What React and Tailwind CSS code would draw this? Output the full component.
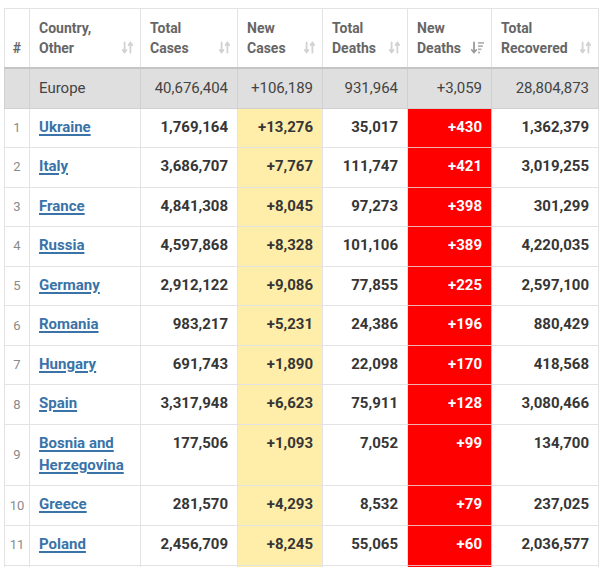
const rows = [
  ["1", "Ukraine", "1,769,164", "+13,276", "35,017", "+430", "1,362,379"],
  ["2", "Italy", "3,686,707", "+7,767", "111,747", "+421", "3,019,255"],
  ["3", "France", "4,841,308", "+8,045", "97,273", "+398", "301,299"],
  ["4", "Russia", "4,597,868", "+8,328", "101,106", "+389", "4,220,035"],
  ["5", "Germany", "2,912,122", "+9,086", "77,855", "+225", "2,597,100"],
  ["6", "Romania", "983,217", "+5,231", "24,386", "+196", "880,429"],
  ["7", "Hungary", "691,743", "+1,890", "22,098", "+170", "418,568"],
  ["8", "Spain", "3,317,948", "+6,623", "75,911", "+128", "3,080,466"],
  ["9", "Bosnia and Herzegovina", "177,506", "+1,093", "7,052", "+99", "134,700"],
  ["10", "Greece", "281,570", "+4,293", "8,532", "+79", "237,025"],
  ["11", "Poland", "2,456,709", "+8,245", "55,065", "+60", "2,036,577"],
  ["12", "Czechia", "1,684,155", "+4,001", "30,422", "+57", "1,606,133"],
];

function SortIcon() {
  return (
    <svg width="11" height="13" viewBox="0 0 11 13" className="shrink-0">
      <g fill="none" stroke="#d2d2d2" strokeWidth="1.8" strokeLinecap="round" strokeLinejoin="round">
        <path d="M2.6 1.5v10M0.8 9l1.8 2.5L4.4 9" />
        <path d="M8.4 11.5v-10M6.6 4l1.8-2.5L10.2 4" />
      </g>
    </svg>
  );
}

function SortDownIcon() {
  return (
    <svg width="13" height="13" viewBox="0 0 13 13" className="shrink-0">
      <g fill="none" stroke="#9a9a9a" strokeWidth="1.8" strokeLinecap="round" strokeLinejoin="round">
        <path d="M3 1.5v10M0.8 9l2.2 2.5L5.2 9" />
      </g>
      <g fill="#b4b4b4">
        <rect x="7" y="1" width="6" height="1.8" />
        <rect x="7" y="4.2" width="4.8" height="1.8" />
        <rect x="7" y="7.4" width="3.4" height="1.8" />
        <rect x="7" y="10.6" width="2" height="1.8" />
      </g>
    </svg>
  );
}

function Head({ a, b, icon = "sort" }) {
  return (
    <th className="border border-[#e3e3e3] border-b-2 border-b-[#c4c4c4] pl-[9px] pr-[7px] pb-[9px] align-bottom text-left">
      <div className="flex items-end justify-between leading-[20px]">
        <span>
          {a}
          <br />
          {b}
        </span>
        <span className="mb-[4px]">{icon === "down" ? <SortDownIcon /> : <SortIcon />}</span>
      </div>
    </th>
  );
}

export default function App() {
  return (
    <div className="w-[600px] h-[567px] overflow-hidden bg-white pt-[8px] pl-[4px] font-['Roboto',_'Liberation_Sans',_sans-serif]">
      <table className="table-fixed border-collapse w-[594px] text-[15px] text-[#363636]">
        <colgroup>
          <col className="w-[25px]" />
          <col className="w-[111px]" />
          <col className="w-[97px]" />
          <col className="w-[85px]" />
          <col className="w-[85px]" />
          <col className="w-[84px]" />
          <col className="w-[107px]" />
        </colgroup>
        <thead>
          <tr className="h-[59px] text-[14px] font-bold text-[#666]">
            <th className="border border-[#e3e3e3] border-b-2 border-b-[#c4c4c4] pb-[9px] align-bottom text-center leading-[20px]">
              #
            </th>
            <Head a="Country," b="Other" />
            <Head a="Total" b="Cases" />
            <Head a="New" b="Cases" />
            <Head a="Total" b="Deaths" />
            <Head a="New" b="Deaths" icon="down" />
            <Head a="Total" b="Recovered" />
          </tr>
        </thead>
        <tbody>
          <tr className="bg-[#dfdfdf] text-[#444] leading-[22px]">
            <td className="border border-[#d0d0d0]"></td>
            <td className="border border-[#d0d0d0] px-[9px] pt-[8px] pb-[9px]">Europe</td>
            <td className="border border-[#d0d0d0] px-[9px] text-right">40,676,404</td>
            <td className="border border-[#d0d0d0] px-[9px] text-right">+106,189</td>
            <td className="border border-[#d0d0d0] px-[9px] text-right">931,964</td>
            <td className="border border-[#d0d0d0] px-[9px] text-right">+3,059</td>
            <td className="border border-[#d0d0d0] px-[9px] text-right">28,804,873</td>
          </tr>
          {rows.map((r) => (
            <tr key={r[0]} className="leading-[22px] font-bold">
              <td className="border border-[#e3e3e3] text-center align-middle text-[13px] font-normal text-[#8a8a8a]">
                {r[0]}
              </td>
              <td className="border border-[#e3e3e3] px-[9px] pt-[7px] pb-[9.55px] align-top">
                <span className="text-[#3a73a8] underline decoration-[1.5px] underline-offset-[2px]">{r[1]}</span>
              </td>
              <td className="border border-[#e3e3e3] px-[9px] pt-[7px] pb-[9.55px] align-top text-right">{r[2]}</td>
              <td className="border border-[#e3e3e3] bg-[#ffeeaa] px-[9px] pt-[7px] pb-[9.55px] align-top text-right">
                {r[3]}
              </td>
              <td className="border border-[#e3e3e3] px-[9px] pt-[7px] pb-[9.55px] align-top text-right">{r[4]}</td>
              <td className="border border-[#f2b0b0] bg-[#ff0000] px-[9px] pt-[7px] pb-[9.55px] align-top text-right text-white">
                {r[5]}
              </td>
              <td className="border border-[#e3e3e3] px-[9px] pt-[7px] pb-[9.55px] align-top text-right">{r[6]}</td>
            </tr>
          ))}
        </tbody>
      </table>
    </div>
  );
}
